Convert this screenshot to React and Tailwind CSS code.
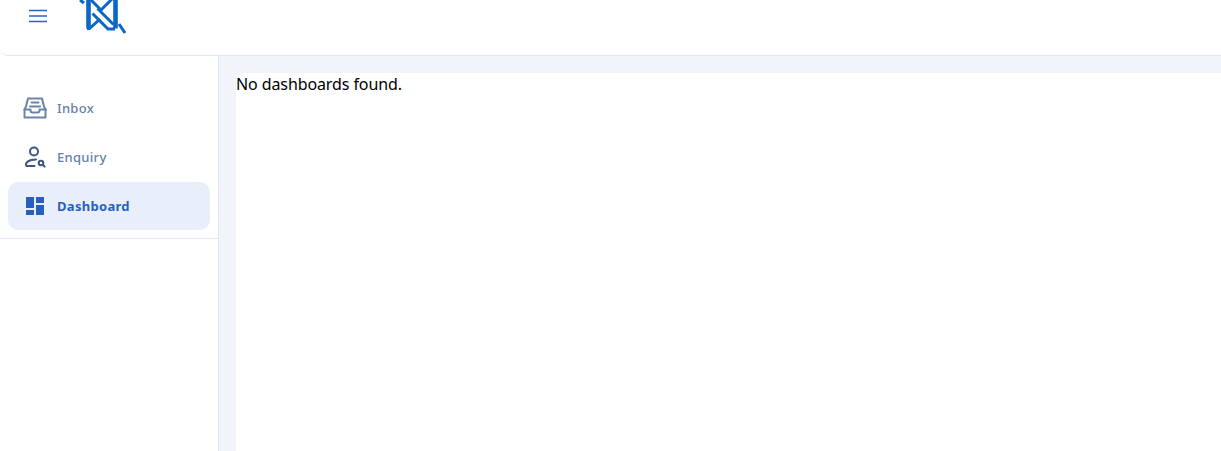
import React from "react";

const Item = ({ icon, label, active }) => (
  <div className={`flex h-12 items-center rounded-[10px] pl-[15px] ${active ? "bg-[#e9effa]" : ""}`}>
    <span className="flex h-6 w-6 items-center justify-center">{icon}</span>
    <span className={`ml-[10px] text-[13px] leading-none tracking-[0.3px] ${active ? "font-bold text-[#285fbf]" : "font-medium text-[#6480ab]"}`}>{label}</span>
  </div>
);

const InboxIcon = () => (
  <svg width="24" height="22" viewBox="0 0 24 22" fill="none" stroke="#6c84aa" strokeWidth="2" strokeLinejoin="round" strokeLinecap="round">
    <path d="M5 1.500h14l2 8 1.500 3v8H1.500v-8l1.500-3z" />
    <path d="M1.500 12.500h6v1a2 2 0 0 0 2 2h5a2 2 0 0 0 2-2v-1h6.500" />
    <path d="M8.500 5.500h7M7 9.500h10" />
  </svg>
);

const EnquiryIcon = () => (
  <svg width="22" height="22" viewBox="0 0 22 22" fill="none" stroke="#3f5680" strokeWidth="2" strokeLinecap="round">
    <circle cx="10" cy="5.500" r="4" />
    <path d="M2.500 20c-2-3 2-6.500 9.500-6.500M2.500 20h8" />
    <circle cx="17" cy="17" r="2.300" />
    <path d="M19 19l1.600 1.600" />
  </svg>
);

const DashIcon = () => (
  <svg width="20" height="20" viewBox="0 0 20 20" fill="#285fbf">
    <rect x="1" y="1" width="8" height="11" />
    <rect x="11" y="1" width="8" height="6" />
    <rect x="11" y="9" width="8" height="10" />
    <rect x="1" y="14" width="8" height="5" />
  </svg>
);

export default function App() {
  return (
    <div className="flex h-[451px] w-[1221px] flex-col overflow-hidden bg-white font-['Noto_Sans',sans-serif]">
      <header className="flex h-[56px] shrink-0 items-start overflow-hidden rounded-bl-lg border-b border-[#e2e8f3] bg-white">
        <svg className="ml-[28px] mt-[9px]" width="20" height="14" viewBox="0 0 20 14" fill="none" stroke="#2a62c4" strokeWidth="1.500">
          <path d="M1 1.500h18M1 7h18M1 12.500h18" />
        </svg>
        <svg className="ml-[27px]" width="55" height="38" viewBox="75 0 55 38" fill="none" stroke="#0a66c8" strokeWidth="3">
          <path strokeWidth="4.600" d="M88.500 0v28.500M115.500 0v28.500" />
          <path d="M87 28.500h2.500L100 19" />
          <path d="M90 -1l11 11 11-11" />
          <path d="M92.500 13.500l15.500 15.500h7" />
          <path d="M97.500 8.500l16 16" />
          <path d="M80 0l4 3M119 24l6 9" />
        </svg>
      </header>
      <div className="flex min-h-0 flex-1">
        <aside className="w-[219px] shrink-0 border-r border-[#e2e8f3] bg-white">
          <div className="border-b border-[#e2e8f3] pl-2 pr-2 pt-7 pb-2">
            <div className="flex flex-col gap-px">
              <Item icon={<InboxIcon />} label="Inbox" />
              <Item icon={<EnquiryIcon />} label="Enquiry" />
              <Item icon={<DashIcon />} label="Dashboard" active />
            </div>
          </div>
        </aside>
        <main className="min-w-0 flex-1 bg-[#f1f5fb] pl-[17px] pt-[17px]">
          <div className="h-full rounded-tl-lg bg-white text-base leading-[22px] tracking-[-0.1px] text-black">No dashboards found.</div>
        </main>
      </div>
    </div>
  );
}
